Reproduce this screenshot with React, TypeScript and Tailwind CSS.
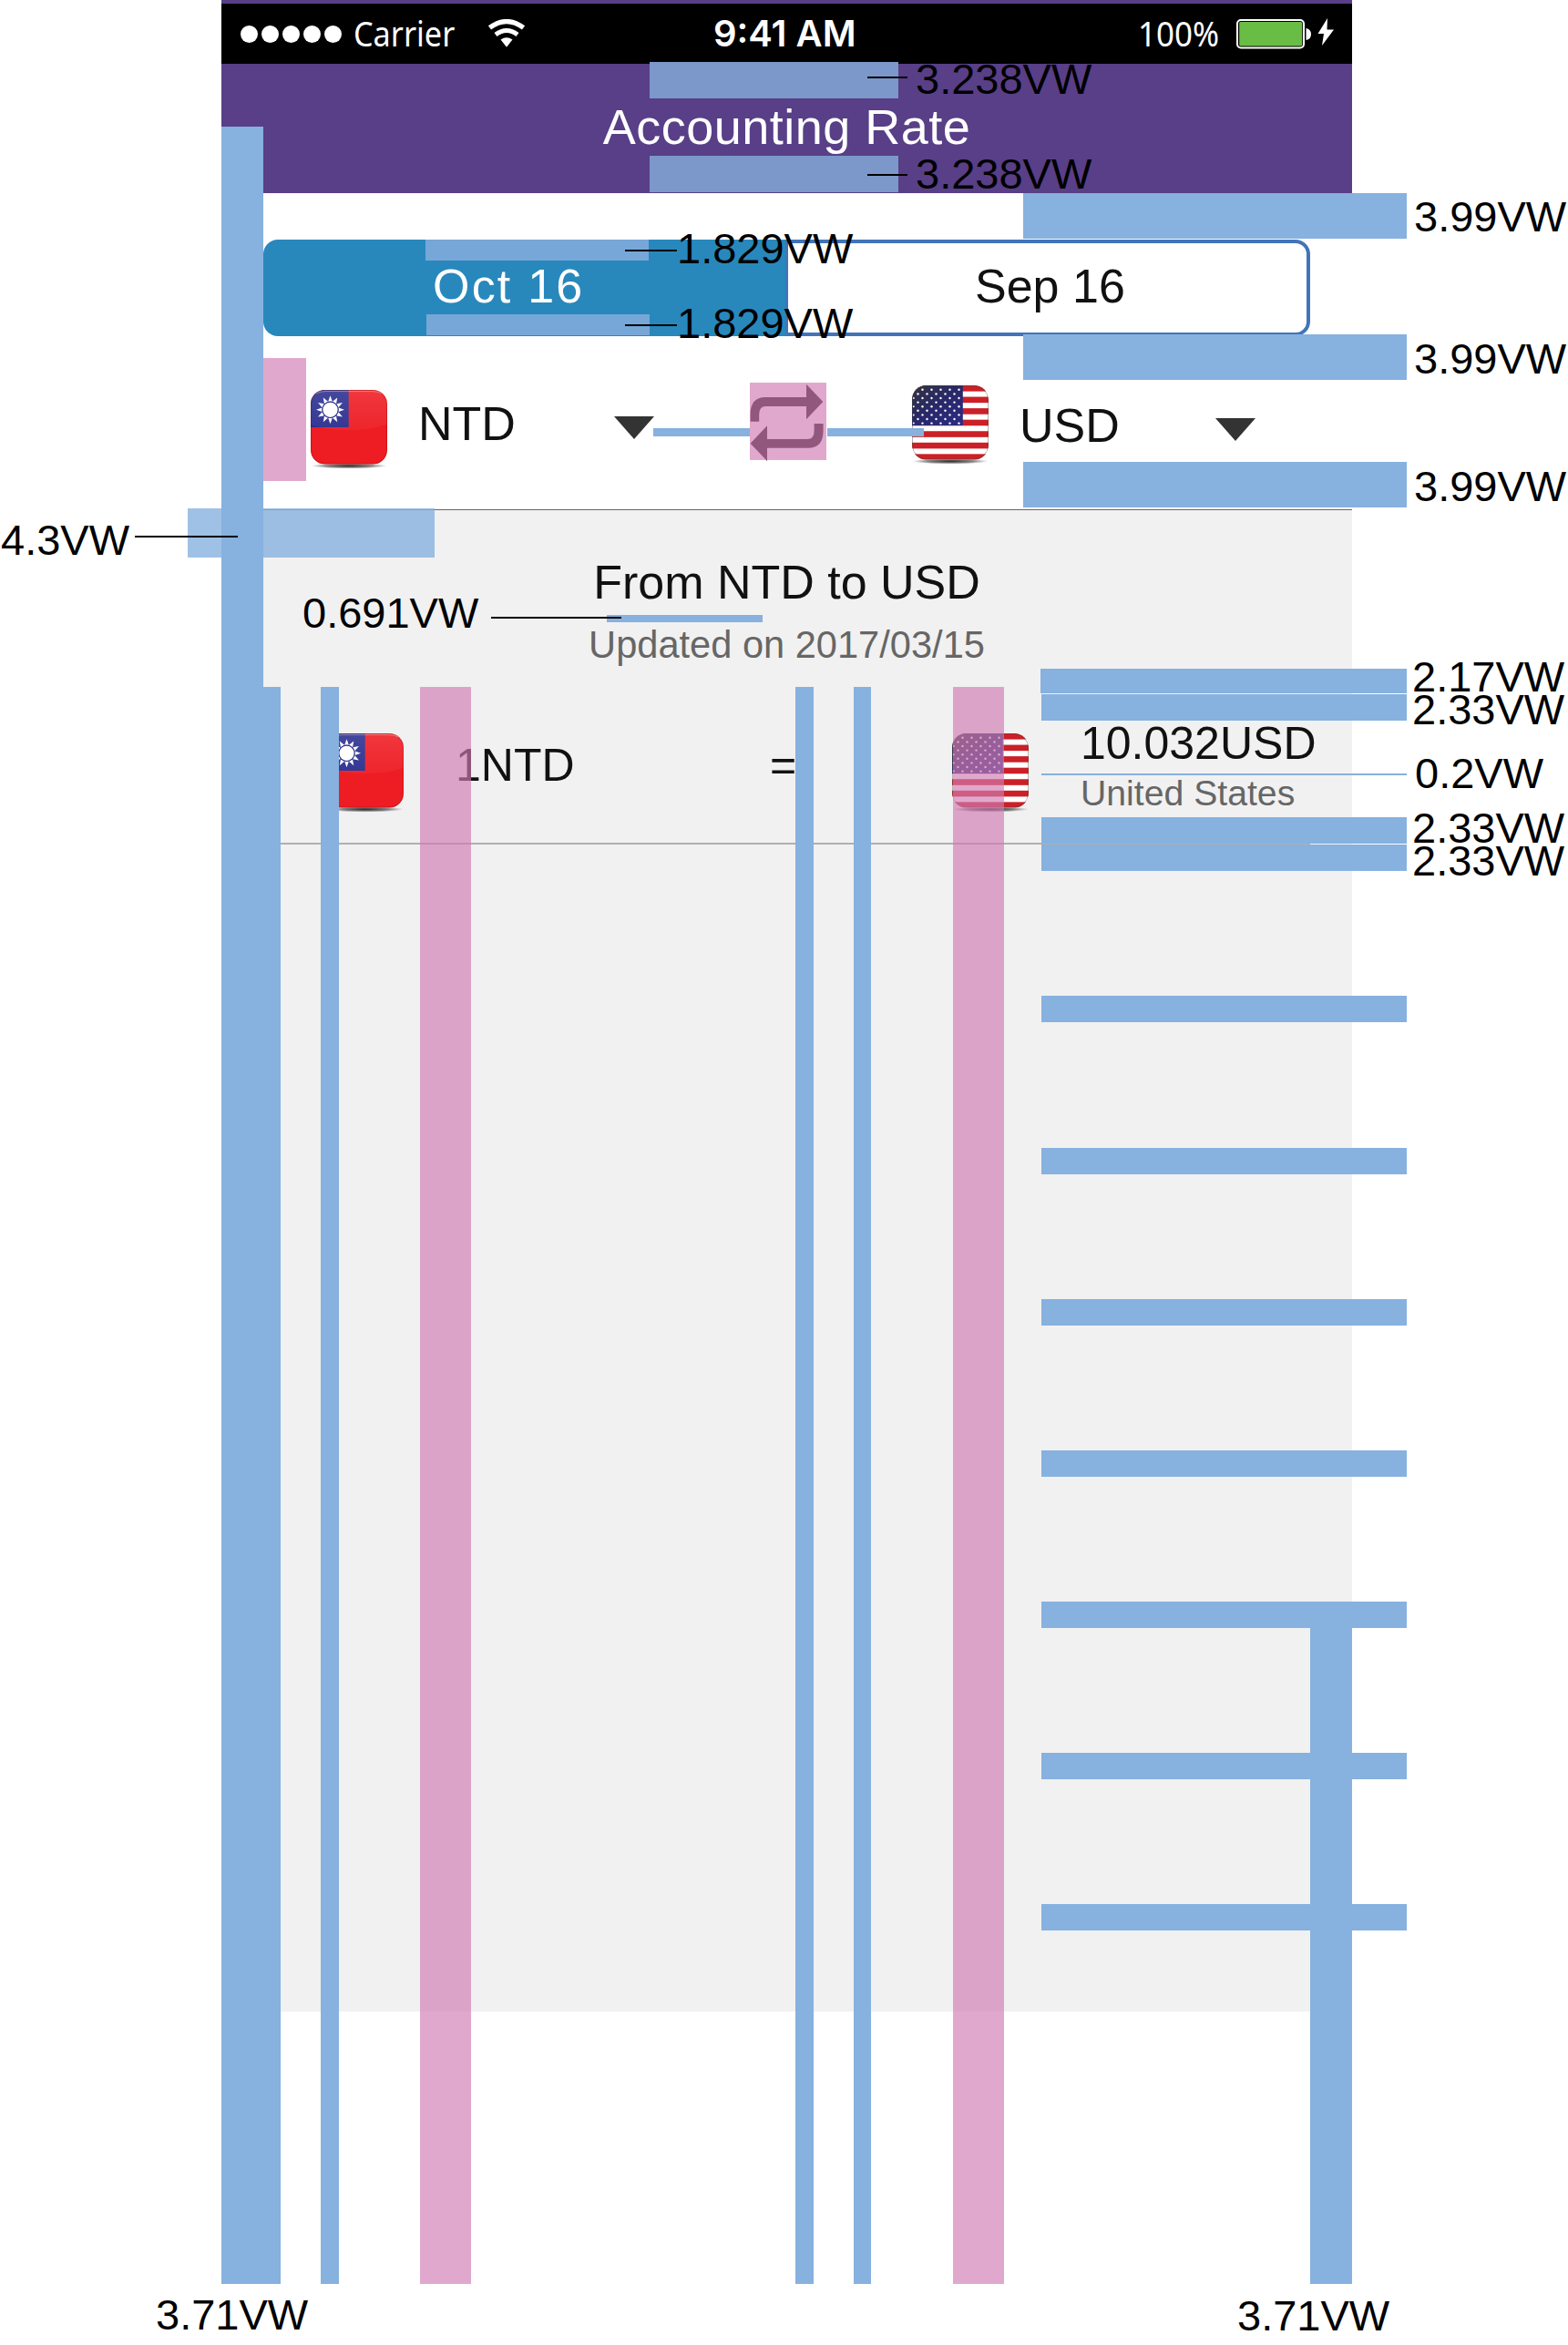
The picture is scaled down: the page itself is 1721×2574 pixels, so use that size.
import React from "react";

const SUN_RAYS = [0, 30, 60, 90, 120, 150, 180, 210, 240, 270, 300, 330];
const STRIPES = [0, 2, 4, 6, 8, 10, 12];
const STAR_ROWS = [0, 1, 2, 3, 4, 5, 6, 7, 8];

function FlagShadow({ id }: { id: string }) {
  return (
    <>
      <defs>
        <radialGradient id={id + "-shadow"}>
          <stop offset="0" stopColor="#111" stopOpacity="0.9" />
          <stop offset="0.6" stopColor="#333" stopOpacity="0.6" />
          <stop offset="1" stopColor="#555" stopOpacity="0" />
        </radialGradient>
        <linearGradient id={id + "-gloss"} x1="0" y1="0" x2="0" y2="1">
          <stop offset="0" stopColor="#fff" stopOpacity="0.12" />
          <stop offset="1" stopColor="#fff" stopOpacity="0.04" />
        </linearGradient>
        <clipPath id={id + "-clip"}>
          <rect x="0" y="0" width="84" height="81.5" rx="15.5" />
        </clipPath>
      </defs>
      <ellipse cx="42" cy="83.3" rx="42" ry="3.2" fill={`url(#${id}-shadow)`} />
    </>
  );
}

function TaiwanFlag({ id, className }: { id: string; className: string }) {
  return (
    <svg viewBox="0 0 84 88" className={"h-[88px] w-[84px] shrink-0 " + className}>
      <FlagShadow id={id} />
      <g clipPath={`url(#${id}-clip)`}>
        <rect width="84" height="82" fill="#ee1c23" />
        <rect width="41.7" height="41" fill="#2b2f8f" />
        <path d="M0 0H84V38Q62 44.500 42 44.500Q20 44.500 0 38Z" fill={`url(#${id}-gloss)`} />
        {SUN_RAYS.map((a) => (
          <path key={a} d="M19.2 12.800L21.500 6.300L23.800 12.800Z" fill="#fff" transform={`rotate(${a} 21.500 21.800)`} />
        ))}
        <circle cx="21.500" cy="21.800" r="9.200" fill="#2b2f8f" />
        <circle cx="21.500" cy="21.800" r="8.100" fill="#fff" />
        <rect x="0.500" y="0.500" width="83" height="80.500" rx="15" fill="none" stroke="#700" strokeOpacity="0.25" />
        <path d="M6 4Q10 1.600 16 1.600H68Q74 1.600 78 4" fill="none" stroke="#fff" strokeOpacity="0.35" />
      </g>
    </svg>
  );
}

function UsFlag({ id, className }: { id: string; className: string }) {
  return (
    <svg viewBox="0 0 84 88" className={"h-[88px] w-[84px] shrink-0 " + className}>
      <FlagShadow id={id} />
      <defs>
        <linearGradient id={id + "-blue"} x1="0" y1="0" x2="1" y2="1">
          <stop offset="0" stopColor="#33333f" />
          <stop offset="0.5" stopColor="#28286a" />
          <stop offset="1" stopColor="#2b2b85" />
        </linearGradient>
      </defs>
      <g clipPath={`url(#${id}-clip)`}>
        <rect width="84" height="82" fill="#fff" />
        {STRIPES.map((i) => (
          <rect key={i} x="0" y={i * 6.28} width="84" height="6.6" fill="#cb2027" />
        ))}
        <rect width="55.8" height="44" fill={`url(#${id}-blue)`} />
        {STAR_ROWS.map((r) =>
          (r % 2 === 0 ? [11.5, 21.5, 31.5, 41.500, 51.5] : [6.5, 16.5, 26.5, 36.5, 46.5]).map((x) => (
            <circle key={`${r}-${x}`} cx={x} cy={4.8 + r * 4.6} r="1.2" fill="#fff" />
          )),
        )}
        {[14, 23.2, 32.4, 41.6].map((y) => (
          <circle key={y} cx="1.800" cy={y} r="1" fill="#fff" />
        ))}
        <rect x="0.500" y="0.500" width="83" height="80.500" rx="15" fill="none" stroke="#444" strokeOpacity="0.4" />
      </g>
    </svg>
  );
}

function Caret({ className }: { className: string }) {
  return (
    <svg viewBox="0 0 44 25" className={"h-[25px] w-[44px] shrink-0 " + className}>
      <path d="M0 0H44L22 25Z" fill="#333" />
    </svg>
  );
}

function SwapIcon({ className }: { className: string }) {
  return (
    <svg viewBox="0 0 84 87" className={"h-[87px] w-[84px] shrink-0 " + className}>
      <g fill="#1a1214">
        <path d="M0.600 42.700V35Q0.600 16 17 16H62V1.700L80.300 21L62 40.300V26H17.500Q10.200 26 10.200 35V42.700Z" />
        <path d="M80.600 45V53Q80.600 71.700 64 71.700H19V86L0.600 66.700L19 47.300V62H63Q70.600 62 70.600 53V45Z" />
      </g>
    </svg>
  );
}

function StatusBar() {
  return (
    <div className="flex h-[66px] bg-black text-white">
      <div className="ml-[21px] mt-[24px] flex gap-[4.600px]">
        <i className="h-[19px] w-[18.500px] rounded-full bg-white" />
        <i className="h-[19px] w-[18.500px] rounded-full bg-white" />
        <i className="h-[19px] w-[18.500px] rounded-full bg-white" />
        <i className="h-[19px] w-[18.500px] rounded-full bg-white" />
        <i className="h-[19px] w-[18.500px] rounded-full bg-white" />
      </div>
      <span className="ml-[13px] mt-[12px] w-[148px] origin-left scale-x-[0.9] whitespace-nowrap font-['Noto_Sans',sans-serif] text-[38px] leading-[40px]">
        Carrier
      </span>
      <svg viewBox="0 0 40 31" className="mt-[17px] h-[31px] w-[40px]">
        <path d="M1.500 9.500Q20 -4.500 38.500 9.500" fill="none" stroke="#fff" strokeWidth="5.200" />
        <path d="M8 17Q20 8 32 17" fill="none" stroke="#fff" strokeWidth="5" />
        <path d="M13.500 22.500Q20 18 26.500 22.500L20 30.800Z" fill="#fff" />
      </svg>
      <span className="ml-[207px] mt-[13px] w-[466px] whitespace-nowrap font-['Inter',sans-serif] text-[40px] font-semibold leading-[40px]">
        9:41 AM
      </span>
      <span className="mt-[12px] w-[108px] origin-left scale-x-[0.92] whitespace-nowrap font-['Noto_Sans',sans-serif] text-[38px] leading-[40px]">
        100%
      </span>
      <svg viewBox="0 0 108 34" className="mt-[16px] h-[34px] w-[108px] shrink-0">
        <rect x="1" y="2" width="73" height="30.500" rx="4" fill="none" stroke="#fff" strokeWidth="2" />
        <rect x="3.200" y="4" width="69" height="26.600" rx="1.500" fill="#69bd45" />
        <path d="M76.500 11Q82 12 82 17.500Q82 23 76.500 24Z" fill="#fff" />
        <path d="M100 0L89.500 17H96L94 30L107 12.500H99.500Z" fill="#fff" />
      </svg>
    </div>
  );
}

function Phone() {
  return (
    <div className="ml-[243px] w-[1241px] text-[52px] leading-[52px] text-[#111]">
      <header className="h-[212px] bg-[#583f87] pt-[4px]">
        <StatusBar />
        <h1 className="pt-[42px] text-center text-[54px] leading-[54px] tracking-[0.500px] text-white">Accounting Rate</h1>
      </header>

      <div className="ml-[46px] mt-[51px] flex h-[106px] w-[1149px]">
        <button className="flex w-[573px] items-start rounded-l-[16px] bg-[#2888bc] pl-[186px] pt-[25px] tracking-[2.200px] text-white">
          Oct 16
        </button>
        <button className="flex w-[576px] items-start rounded-r-[16px] border-4 border-l-3 border-[#4274b9] bg-white pl-[205px] pt-[21px]">
          Sep 16
        </button>
      </div>

      <div className="flex h-[190px] items-start">
        <TaiwanFlag id="tw-select" className="ml-[98px] mt-[59px]" />
        <span className="ml-[34px] mt-[70px] w-[215px]">NTD</span>
        <Caret className="mt-[88px]" />
        <SwapIcon className="ml-[105px] mt-[51px]" />
        <UsFlag id="us-select" className="ml-[94px] mt-[54px]" />
        <span className="ml-[34px] mt-[72px] w-[215px]">USD</span>
        <Caret className="mt-[90px]" />
      </div>

      <section className="h-[1649px] border-t border-[#666] bg-[#f1f1f1]">
        <h2 className="pt-[53px] text-center">From NTD to USD</h2>
        <p className="pt-[22px] text-center text-[41.600px] leading-[42px] text-[#666]">Updated on 2017/03/15</p>
        <div className="ml-[46px] flex h-[198px] w-[1149px] items-start border-b-2 border-[#b0b0b0] text-[50px] leading-[50px]">
          <TaiwanFlag id="tw-row" className="ml-[70px] mt-[76px]" />
          <span className="ml-[57px] mt-[86px] w-[345px] shrink-0">1NTD</span>
          <span className="mt-[86px] w-[200px] shrink-0">=</span>
          <UsFlag id="us-row" className="mt-[76px]" />
          <div className="ml-[57px] mt-[62px] w-0 shrink-0 whitespace-nowrap">
            <p>10.032USD</p>
            <p className="mt-[10px] text-[39.200px] leading-[40px] text-[#666]">United States</p>
          </div>
        </div>
      </section>
    </div>
  );
}

/* Spacing guides that lie over the screen */
const GUIDES = [
  // header padding
  "left-[713px] top-[68px] w-[273px] h-[40px] bg-[#7c98cb]",
  "left-[713px] top-[171px] w-[273px] h-[40px] bg-[#7c98cb]",
  // tab padding
  "left-[467px] top-[263px] w-[245px] h-[23px] bg-[#76a7d8]",
  "left-[468px] top-[345px] w-[245px] h-[23px] bg-[#76a7d8]",
  // block gaps
  "left-[1123px] top-[212px] w-[421px] h-[50px] bg-[#87b1df]",
  "left-[1123px] top-[367px] w-[421px] h-[50px] bg-[#87b1df]",
  "left-[1123px] top-[507px] w-[421px] h-[50px] bg-[#87b1df]",
  // selector gaps
  "left-[289px] top-[393px] w-[47px] h-[135px] bg-[#d27bb3]/66",
  "left-[717px] top-[470px] w-[106px] h-[9px] bg-[#87b1df]",
  "left-[908px] top-[470px] w-[106px] h-[9px] bg-[#87b1df]",
  "left-[823px] top-[420px] w-[84px] h-[85px] bg-[#d27bb3]/66",
  // summary padding
  "left-[206px] top-[558px] w-[271px] h-[54px] bg-[#87b1df]/80",
  "left-[666px] top-[675px] w-[171px] h-[8px] bg-[#87b1df]",
  // columns
  "left-[243px] top-[139px] w-[46px] h-[2368px] bg-[#87b1df]",
  "left-[289px] top-[754px] w-[19px] h-[1753px] bg-[#87b1df]",
  "left-[352px] top-[754px] w-[20px] h-[1753px] bg-[#87b1df]",
  "left-[461px] top-[754px] w-[56px] h-[1753px] bg-[#d27bb3]/66",
  "left-[873px] top-[754px] w-[20px] h-[1753px] bg-[#87b1df]",
  "left-[937px] top-[754px] w-[19px] h-[1753px] bg-[#87b1df]",
  "left-[1046px] top-[754px] w-[56px] h-[1753px] bg-[#d27bb3]/66",
  "left-[1438px] top-[1758px] w-[46px] h-[749px] bg-[#87b1df]",
  // row padding
  "left-[1142px] top-[734px] w-[402px] h-[27px] bg-[#87b1df]",
  "left-[1143px] top-[762px] w-[401px] h-[29px] bg-[#87b1df]",
  "left-[1143px] top-[849px] w-[401px] h-[2px] bg-[#87b1df]",
  "left-[1143px] top-[897px] w-[401px] h-[29px] bg-[#87b1df]",
  "left-[1143px] top-[927px] w-[401px] h-[29px] bg-[#87b1df]",
  "left-[1143px] top-[1093px] w-[401px] h-[29px] bg-[#87b1df]",
  "left-[1143px] top-[1260px] w-[401px] h-[29px] bg-[#87b1df]",
  "left-[1143px] top-[1426px] w-[401px] h-[29px] bg-[#87b1df]",
  "left-[1143px] top-[1592px] w-[401px] h-[29px] bg-[#87b1df]",
  "left-[1143px] top-[1758px] w-[401px] h-[29px] bg-[#87b1df]",
  "left-[1143px] top-[1924px] w-[401px] h-[29px] bg-[#87b1df]",
  "left-[1143px] top-[2090px] w-[401px] h-[29px] bg-[#87b1df]",
  // leader lines
  "left-[952px] top-[84px] w-[44px] h-[2px] bg-black",
  "left-[952px] top-[191px] w-[44px] h-[2px] bg-black",
  "left-[686px] top-[274px] w-[57px] h-[2px] bg-black",
  "left-[686px] top-[356px] w-[57px] h-[2px] bg-black",
  "left-[148px] top-[588px] w-[113px] h-[2px] bg-black",
  "left-[539px] top-[677px] w-[143px] h-[2px] bg-black",
];

const LABELS = [
  { text: "3.238VW", at: "left-[1005px] top-[63px]" },
  { text: "3.238VW", at: "left-[1005px] top-[167px]" },
  { text: "1.829VW", at: "left-[743px] top-[249px]" },
  { text: "1.829VW", at: "left-[743px] top-[331px]" },
  { text: "3.99VW", at: "left-[1552px] top-[214px]" },
  { text: "3.99VW", at: "left-[1552px] top-[370px]" },
  { text: "3.99VW", at: "left-[1552px] top-[510px]" },
  { text: "4.3VW", at: "left-[1px] top-[569px]" },
  { text: "0.691VW", at: "left-[332px] top-[649px]" },
  { text: "2.17VW", at: "left-[1550px] top-[719px]" },
  { text: "2.33VW", at: "left-[1550px] top-[755px]" },
  { text: "0.2VW", at: "left-[1553px] top-[825px]" },
  { text: "2.33VW", at: "left-[1550px] top-[885px]" },
  { text: "2.33VW", at: "left-[1550px] top-[921px]" },
  { text: "3.71VW", at: "left-[171px] top-[2517px]" },
  { text: "3.71VW", at: "left-[1358px] top-[2518px]" },
];

export default function App() {
  return (
    <div className="relative h-[2574px] w-[1721px] overflow-hidden bg-white font-['Liberation_Sans',Arial,sans-serif]">
      <Phone />
      {GUIDES.map((guide) => (
        <div key={guide} className={"absolute " + guide} />
      ))}
      {LABELS.map((label) => (
        <span key={label.at} className={"absolute whitespace-nowrap text-[47px] leading-[47px] text-black " + label.at}>
          {label.text}
        </span>
      ))}
    </div>
  );
}
